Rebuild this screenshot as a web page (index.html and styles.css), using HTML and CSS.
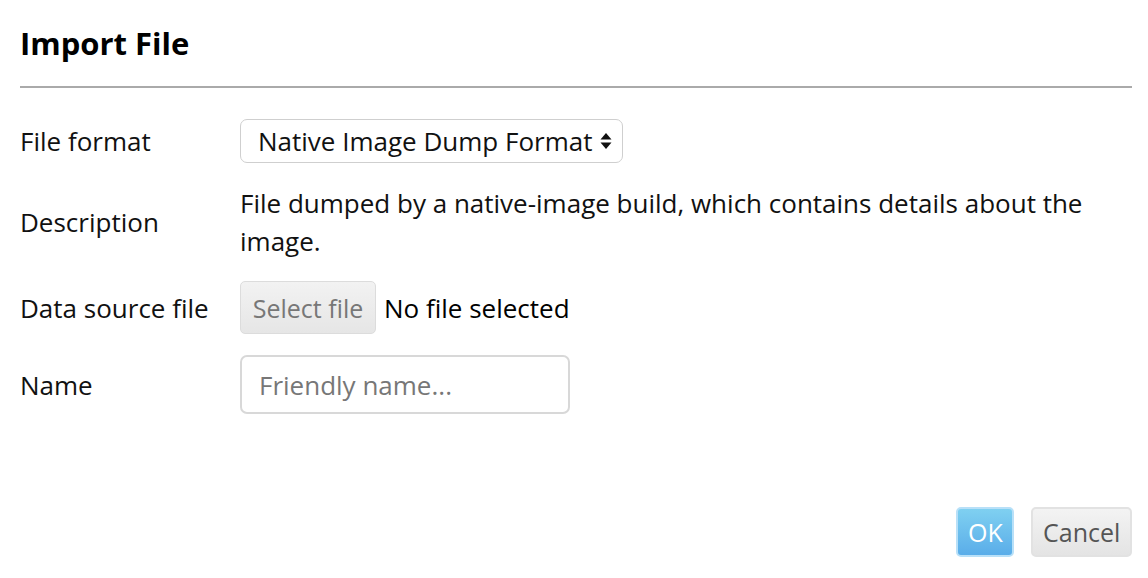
FILE: index.html
```html
<!DOCTYPE html>
<html lang="en">
<head>
<meta charset="utf-8">
<title>Import File</title>
<link rel="stylesheet" href="styles.css">
</head>
<body>
<div class="dialog">
  <header class="header">
    <h1 class="title">Import File</h1>
  </header>
  <div class="form">
    <div class="label">File format</div>
    <div class="value">
      <div class="select">
        <span class="select-text">Native Image Dump Format</span>
        <svg class="select-arrows" width="12" height="18" viewBox="0 0 12 18" aria-hidden="true">
          <path d="M6 1 L11.5 7.5 L0.5 7.5 Z" fill="#111"/>
          <path d="M6 17 L11.5 10.5 L0.5 10.5 Z" fill="#111"/>
        </svg>
      </div>
    </div>
    <div class="label">Description</div>
    <div class="value desc">File dumped by a native-image build, which contains details about the image.</div>
    <div class="label">Data source file</div>
    <div class="value file-row">
      <button class="file-btn" type="button">Select file</button>
      <span class="file-status">No file selected</span>
    </div>
    <div class="label">Name</div>
    <div class="value">
      <input class="text-input" type="text" placeholder="Friendly name...">
    </div>
  </div>
  <footer class="footer">
    <button class="btn btn-primary" type="button">OK</button>
    <button class="btn btn-default" type="button">Cancel</button>
  </footer>
</div>
</body>
</html>
```

FILE: styles.css
```css
* { box-sizing: border-box; }

html, body {
  margin: 0;
  padding: 0;
  background: #ffffff;
}

body {
  font-family: "Open Sans", "Liberation Sans", sans-serif;
  font-size: 26px;
  color: #111111;
}

.dialog {
  height: 578px;
  display: flex;
  flex-direction: column;
  padding: 23px 16px 21px 20px;
}

.header {
  border-bottom: 2px solid #aaaaaa;
  padding-bottom: 23px;
}

.title {
  margin: 0;
  font-size: 31px;
  font-weight: 700;
  line-height: 40px;
  color: #000000;
}

.form {
  margin-top: 31px;
  display: grid;
  grid-template-columns: 220px 1fr;
  row-gap: 21px;
  align-items: center;
}

.label {
  line-height: 38px;
}

.value {
  line-height: 38px;
}

.select {
  display: inline-flex;
  align-items: center;
  gap: 8px;
  height: 44px;
  width: 383px;
  padding: 0 10px 0 17px;
  border: 1px solid #cfcfcf;
  border-radius: 7px;
  background: #ffffff;
}

.select-text {
  white-space: nowrap;
  flex: 1;
  line-height: 40px;
}

.select-arrows {
  display: block;
  flex: none;
}

.desc {
  padding-right: 10px;
}

.file-row {
  display: flex;
  align-items: center;
  gap: 8px;
}

.file-btn {
  font: inherit;
  font-size: 25px;
  color: #777777;
  height: 53px;
  width: 136px;
  padding: 0;
  border: 1px solid #dcdcdc;
  border-radius: 5px;
  background: linear-gradient(#f2f2f2, #e6e6e6);
}

.file-status {
  color: #000000;
}

.text-input {
  font: inherit;
  color: #111111;
  height: 59px;
  width: 330px;
  padding: 0 17px;
  border: 2px solid #d8d8d8;
  border-radius: 7px;
  background: #ffffff;
  outline: none;
}

.text-input::placeholder {
  color: #777777;
}

.footer {
  margin-top: auto;
  display: flex;
  justify-content: flex-end;
  gap: 17px;
}

.btn {
  font: inherit;
  font-size: 25px;
  height: 50px;
  padding: 0 10px;
  border-radius: 5px;
}

.btn-primary {
  width: 58px;
  color: #ffffff;
  border: 2px solid #b8e0f8;
  background: linear-gradient(#7fd0f1, #5aade9);
}

.btn-default {
  width: 101px;
  color: #555555;
  border: 2px solid #e2e2e2;
  background: linear-gradient(#f3f3f3, #e4e4e4);
}
```
